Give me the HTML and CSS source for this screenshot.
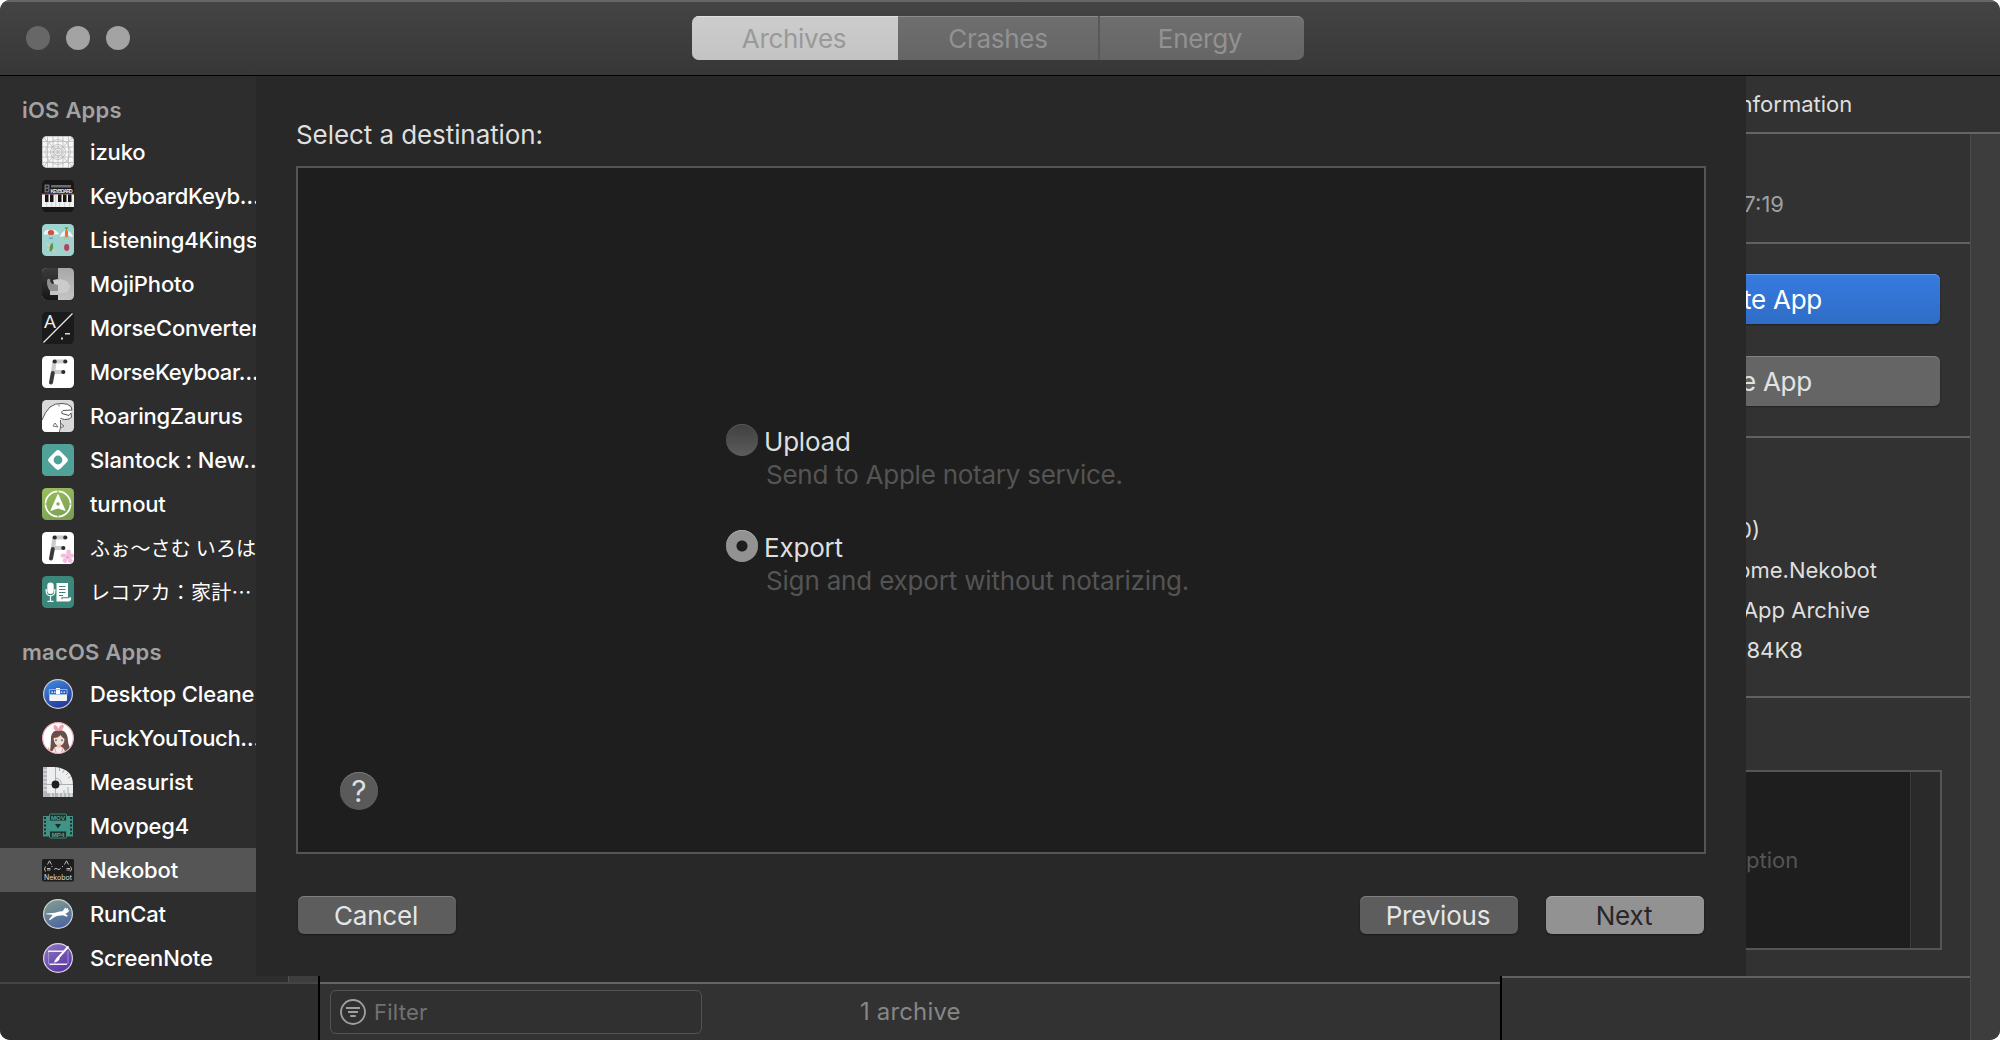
FILE: index.html
```html
<!DOCTYPE html>
<html lang="en">
<head>
<meta charset="utf-8">
<title>Archives</title>
<link rel="stylesheet" href="styles.css">
</head>
<body>
<div class="window">
  <header class="titlebar">
    <div class="lights"><span class="light light-dim"></span><span class="light"></span><span class="light"></span></div>
    <div class="segments">
      <span class="segment segment-on">Archives</span>
      <span class="segment segment-mid">Crashes</span>
      <span class="segment segment-last">Energy</span>
    </div>
  </header>

  <div class="columns">
    <nav class="sidebar">
      <div class="list">
        <h2 class="group">iOS Apps</h2>
        <div class="app">
          <svg class="icon icon-round" viewBox="0 0 32 32"><rect width="32" height="32" fill="#f6f6f6"/><g fill="none" stroke="#bababa" stroke-width=".8"><rect x=".5" y=".5" width="31" height="31" rx="4"/><path d="M0 5.500H32M0 11H32M0 16H32M0 21H32M0 26.500H32M5.500 0V32M11 0V32M16 0V32M21 0V32M26.500 0V32M0 0L32 32M32 0L0 32"/><circle cx="16" cy="16" r="12.500"/><circle cx="16" cy="16" r="7.500"/><circle cx="16" cy="16" r="4"/></g></svg>
          <span class="name">izuko</span></div>
        <div class="app">
          <svg class="icon" viewBox="0 0 32 32"><rect width="32" height="32" rx="4.500" fill="#171717"/><path d="M2.500 4.500h5v8h-5zM9 5h20v2.500H9z" fill="#6c6c6c"/><path d="M4 6h2v1.500H4zM4 9h2v2H4z" fill="#222"/><text x="8.500" y="12.600" class="t-key" textLength="22">KEYBOARD</text><rect y="13.500" width="32" height="1" fill="#d63a3a"/><rect y="14.500" width="32" height="12.500" fill="#f2f2f2"/><path d="M3 14.500h3.500v7.500H3zM8 14.500h3.500v7.500H8zM16 14.500h3.500v7.500H16zM21 14.500h3.500v7.500H21zM26 14.500h3.500v7.500H26z" fill="#151515"/><path d="M4.700 22v5M9.700 22v5M13.700 15v12M17.700 22v5M22.700 22v5M27.700 22v5" stroke="#bbb" stroke-width=".6"/></svg>
          <span class="name name-cut">KeyboardKeyb…</span></div>
        <div class="app">
          <svg class="icon" viewBox="0 0 32 32"><rect width="32" height="32" rx="4.500" fill="#9fd3cf"/><path d="M1.500 10Q3 5 8 6q6-1.500 9 4-4 1-6 0H7q-3 1-5.500 0z" fill="#f3f5f3"/><ellipse cx="9" cy="8.500" rx="3.200" ry="2.600" fill="#cc563c"/><path d="M7 14.200h4" stroke="#5274b5" stroke-width=".8"/><path d="M18 13q1-5 6-7 6 2 7 7-4 0-6-3-3 3-7 3z" fill="#f3f5f3"/><ellipse cx="24.500" cy="9.500" rx="1.600" ry="4" fill="#df7337"/><path d="M22.500 3.500h4l-2 2z" fill="#3f8b4a"/><path d="M23.500 13l-1 3M25.500 13l1 3" stroke="#e5a780" stroke-width="1"/><path d="M5 19.500l8 9M5 26l7-4" stroke="#ecc8a2" stroke-width="1.300"/><path d="M10.500 18.500q-5 5-2 9.500 4-3 2-9.500z" fill="#57954d"/><path d="M19.500 20l3 2M30 20l-3 2M21 27h7" stroke="#ecb794" stroke-width="1.500"/><ellipse cx="24.700" cy="23.500" rx="2.600" ry="3.400" fill="#a84766"/></svg>
          <span class="name">Listening4Kings</span></div>
        <div class="app">
          <svg class="icon" viewBox="0 0 32 32"><defs><linearGradient id="photo" x1="0" y1="0" x2="0" y2="1"><stop offset="0" stop-color="#3c3c3c"/><stop offset="1" stop-color="#171717"/></linearGradient><linearGradient id="pale" x1="0" y1="0" x2="0" y2="1"><stop offset="0" stop-color="#a8a8a8"/><stop offset="1" stop-color="#c4c4c4"/></linearGradient></defs><rect width="32" height="32" rx="4.500" fill="url(#pale)"/><path d="M4.500 0H16V32H4.500A4.500 4.500 0 0 1 0 27.500V4.500A4.500 4.500 0 0 1 4.500 0z" fill="url(#photo)"/><path d="M5 14q0-4 3-3 0 5 4 5l4-2v9q-3 3-7 1-4-4-4-10z" fill="#8f8f8f"/><path d="M16 12l3-1 2 1q5 0 7 6-1 6-5 7h-7z" fill="#cbcbcb"/><path d="M8 23h8v4H8z" fill="#c4c4c4"/><path d="M11 12l5-1v6l-4-1z" fill="#d0d0d0"/></svg>
          <span class="name">MojiPhoto</span></div>
        <div class="app">
          <svg class="icon" viewBox="0 0 32 32"><rect width="32" height="32" rx="4.500" fill="#1b1b1b"/><text x="1.800" y="16" class="t-morse">A</text><path d="M1.500 30.500L30.500 1.500" stroke="#e6e6e6" stroke-width="1.300"/><path d="M19 25.500h2v2h-2zM23 21h5v1.500h-5z" fill="#ddd"/></svg>
          <span class="name">MorseConverter</span></div>
        <div class="app">
          <svg class="icon" viewBox="0 0 32 32"><rect width="32" height="32" rx="4.500" fill="#fff"/><path d="M12.500 5.500H23M11.500 16H21M12.500 5.500L11 16" stroke="#ccc" stroke-width="4.200" stroke-linecap="round"/><path d="M10.800 17L9 26.500" stroke="#3a3a3a" stroke-width="4" stroke-linecap="round"/><g fill="#2c2c2c"><circle cx="12.700" cy="5.500" r="2.100"/><circle cx="23.300" cy="5.500" r="2.100"/><circle cx="21.300" cy="16" r="2.100"/></g></svg>
          <span class="name name-cut">MorseKeyboar…</span></div>
        <div class="app">
          <svg class="icon" viewBox="0 0 32 32"><rect width="32" height="32" rx="4.500" fill="#d9d9d9"/><path d="M0 20Q3 12 8 7q5-4 12-3.500 6 0 9 3l1 4-1 1.500.5 3-1 3-4 1q-3-.5-5 1 1 6-1 12H4.500Q0 32 0 27z" fill="#fff"/><path d="M0 20Q3 12 8 7q5-4 12-3.500 6 0 9 3l1 3.500-9 .5q-2 1-1 3l7 2 2-2.500.5 4-2 2-5 .500-4-1M17.500 32q2-6 1-12" fill="none" stroke="#555" stroke-width="1"/><path d="M17 4.500v2M11 26l2-3 3 4zM18.500 23l3.500 3-3 2" fill="none" stroke="#666" stroke-width=".9"/></svg>
          <span class="name">RoaringZaurus</span></div>
        <div class="app">
          <svg class="icon" viewBox="0 0 32 32"><rect width="32" height="32" rx="4.500" fill="#50a198"/><rect x="8.200" y="8.200" width="15.600" height="15.600" rx="3.200" transform="rotate(45 16 16)" fill="#fff"/><circle cx="16" cy="16" r="4.400" fill="#50a198"/></svg>
          <span class="name">Slantock : New…</span></div>
        <div class="app">
          <svg class="icon" viewBox="0 0 32 32"><defs><linearGradient id="leaf" x1=".3" y1="0" x2=".7" y2="1"><stop offset="0" stop-color="#98bd5a"/><stop offset="1" stop-color="#7a9e55"/></linearGradient></defs><rect width="32" height="32" rx="4.500" fill="url(#leaf)"/><circle cx="16" cy="16" r="12.600" fill="none" stroke="#fff" stroke-width="1.700"/><path d="M16 1.500v4M16 26.500v4M1.500 16h4M26.500 16h4" stroke="#8bb057" stroke-width="1"/><path fill-rule="evenodd" d="M16 5.500L23.800 23 16 20.500 8.200 23zM16 14.200a1.700 1.700 0 1 0 .01 0z" fill="#fff"/></svg>
          <span class="name">turnout</span></div>
        <div class="app">
          <svg class="icon" viewBox="0 0 32 32"><rect width="32" height="32" rx="4.500" fill="#fff"/><path d="M12.500 5.500H23M11.500 16H21M12.500 5.500L11 16" stroke="#ccc" stroke-width="4.200" stroke-linecap="round"/><path d="M10.800 17L9 26.500" stroke="#3a3a3a" stroke-width="4" stroke-linecap="round"/><g fill="#2c2c2c"><circle cx="12.700" cy="5.500" r="2.100"/><circle cx="23.300" cy="5.500" r="2.100"/><circle cx="21.300" cy="16" r="2.100"/></g><g fill="#f3bddf"><ellipse cx="26.500" cy="20.500" rx="2.300" ry="3"/><ellipse cx="21.600" cy="23.600" rx="3" ry="2.200"/><ellipse cx="23" cy="28.600" rx="2.300" ry="2.500"/><ellipse cx="28.200" cy="28.600" rx="2.300" ry="2.500"/><ellipse cx="29.600" cy="23.600" rx="2.400" ry="2.200"/><circle cx="25.700" cy="25.300" r="2.400"/></g><circle cx="25.700" cy="25.300" r=".9" fill="#e08cc0"/></svg>
          <span class="name name-ja" lang="ja">ふぉ〜さむ いろは</span></div>
        <div class="app">
          <svg class="icon" viewBox="0 0 32 32"><rect width="32" height="32" rx="4.500" fill="#3b877b"/><rect x="5.300" y="6.500" width="6.400" height="11.500" rx="3.200" fill="#fff"/><path d="M4.200 13v2.500a4.300 4.300 0 0 0 8.600 0V13M8.500 20v5M5.500 25.300h6" fill="none" stroke="#fff" stroke-width="1.200"/><path d="M14.500 7h11.500v14.500h3.200q0 4-2.700 4H14.500z" fill="#fff"/><path d="M17 10.500h6.500M17 13.500h6.500M17 16.500h6.500M17 19.500h4M20 23.300v-1.500h7" fill="none" stroke="#3b877b" stroke-width="1.100"/></svg>
          <span class="name name-ja" lang="ja">レコアカ：家計…</span></div>

        <h2 class="group group-mac">macOS Apps</h2>
        <div class="app">
          <svg class="icon" viewBox="0 0 32 32"><defs><linearGradient id="blue" x1="0" y1="0" x2=".5" y2="1"><stop offset="0" stop-color="#3f8fe6"/><stop offset="1" stop-color="#283c9c"/></linearGradient></defs><circle cx="16" cy="16" r="14.400" fill="url(#blue)" stroke="#cfcfd0" stroke-width="1.200"/><path d="M7.300 16.500h17.700v5.500q0 1-1 1H8.300q-1 0-1-1z" fill="#f4f4f4"/><path d="M14 10h4v6h-4z" fill="#fff"/><path d="M7.300 11.500h17.700v5H7.300z" fill="none" stroke="#9cc1ee" stroke-width=".9"/><path d="M9.500 13.500h1.500v1.500H9.500zM12 13.500h1.500v1.500H12zM18.700 13.500h1.500v1.500h-1.500zM21.500 13.500H23v1.500h-1.500z" fill="#d8e6fa"/></svg>
          <span class="name">Desktop Cleane</span></div>
        <div class="app">
          <svg class="icon" viewBox="0 0 32 32"><defs><clipPath id="face"><circle cx="16" cy="16" r="15"/></clipPath></defs><circle cx="16" cy="16" r="15.400" fill="#fff" stroke="#efa9b6" stroke-width="1.200"/><g clip-path="url(#face)"><path d="M8 29Q9 20 9 15q1-7 8-7t8.500 7q0 6 3 13l-4 2z" fill="#6b4f49"/><path d="M11.500 16q5 0 7-3 1 2 4 4 0 6-5.500 7-5-1-5.500-8z" fill="#f8dfd2"/><path d="M10 32q1-8 6.500-8t7.500 8z" fill="#f6eceb"/><path d="M15 22h3.500v4H15z" fill="#f3cdbd"/><path d="M12.500 26l2 6M21 26l-2 6" stroke="#e8a5ae" stroke-width="1.200"/><circle cx="14" cy="18.300" r="1" fill="#4d7fa3"/><circle cx="20" cy="18.300" r="1" fill="#4d7fa3"/><path d="M6 25l3 4-3 2z" fill="#d9b3a0"/></g><path d="M16.500 9Q12 9.500 11.500 5q0-2.500 2-2 2.500 1.500 3 4 .5-4 3.500-4.500 2.500 0 1.500 3-1.500 3.500-5 3.500z" fill="#ee9fb2"/></svg>
          <span class="name name-cut">FuckYouTouch…</span></div>
        <div class="app">
          <svg class="icon" viewBox="0 0 32 32"><path d="M1 1h12.500Q31 3 31 19v12H1z" fill="#eceeef"/><path d="M1 1h4v30H1zM1 27h30v4H1z" fill="#b4b7ba"/><path d="M1 4h4M1 8h4M1 12h4M1 16h4M1 20h4M1 24h4M9 27v4M13 27v4M17 27v4M21 27v4M25 27v4M29 27v4" stroke="#eceeef" stroke-width="1.200"/><path d="M13.500 1v30M5 18.500h26M19.500 18.500a6.500 6.500 0 0 0-6-6.500M17.500 2v3M22 4l-1.500 3M26 7l-2 2M28.500 10.500l-2.500 1.500M26 21v6M22 24v3" fill="none" stroke="#a5a8ab" stroke-width=".9"/><circle cx="13.500" cy="18.500" r="3.900" fill="#1f1f1f"/></svg>
          <span class="name">Measurist</span></div>
        <div class="app">
          <svg class="icon" viewBox="0 0 32 32"><rect x="1" y="6" width="30" height="20.500" fill="#3f9486"/><path d="M3 7v19M29 7v19" stroke="#252b2a" stroke-width="2" stroke-dasharray="2 1.800"/><rect x="7.500" y="4" width="17" height="7" rx="1" fill="#22302d" stroke="#3f9486" stroke-width=".9"/><rect x="7.500" y="21" width="17" height="7" rx="1" fill="#22302d" stroke="#3f9486" stroke-width=".9"/><path d="M13 14h6l-3 4.500z" fill="#1f2b28"/><text x="16" y="9.900" class="t-mov">MOV</text><text x="16" y="26.900" class="t-mov">MP4</text></svg>
          <span class="name">Movpeg4</span></div>
        <div class="app app-on">
          <svg class="icon" viewBox="0 0 32 32"><rect y="5" width="32" height="22.500" rx="1.800" fill="#1c1c1c"/><path d="M5.500 10.500L7.500 6.800 9.500 10.500M22.500 10.500L24.500 6.800 26.500 10.500M3.500 12.500q-2 2.500 0 5M28.500 12.500q2 2.500 0 5M5 14.500h3.500M5 16h3.500M24.500 14.500H28M24.500 16H28M9.500 12l1 1M12 15.500q2-2 3.500-.5t3-.5M20 12l1 1" fill="none" stroke="#ccc" stroke-width=".9"/><text x="16" y="25.500" class="t-neko">Nekobot</text></svg>
          <span class="name">Nekobot</span></div>
        <div class="app">
          <svg class="icon" viewBox="0 0 32 32"><defs><linearGradient id="run" x1=".3" y1="0" x2=".7" y2="1"><stop offset="0" stop-color="#7f9c8e"/><stop offset="1" stop-color="#4a64a4"/></linearGradient></defs><circle cx="16" cy="16" r="14.400" fill="url(#run)" stroke="#cfd2d3" stroke-width="1.200"/><path d="M4.500 15.500L13 14.800q4-1.800 7.500-1.500l1.500-2 1.500-1.800.8 1.200 1.800-.6-.2 1.500 1.400 1.200-2 2-2 1 2.500 2-1 1-4-1.500-6 .8-3 1.500-4 2.700-.8-1 3-3.200.3-1.300-6.300-.500z" fill="#fff"/></svg>
          <span class="name">RunCat</span></div>
        <div class="app">
          <svg class="icon" viewBox="0 0 32 32"><defs><linearGradient id="ink" x1="0" y1="0" x2=".6" y2="1"><stop offset="0" stop-color="#8f7ac4"/><stop offset="1" stop-color="#5c37a6"/></linearGradient></defs><circle cx="16" cy="16" r="14.400" fill="url(#ink)" stroke="#d8d2e4" stroke-width="1.200"/><path d="M6 9.300h17M7.500 22.300h17.500" stroke="#f1edf8" stroke-width="1.400"/><path d="M6.500 10v12M26 9v13" stroke="#a795d4" stroke-width=".9"/><path d="M26 5L16 16" stroke="#fff" stroke-width="1.900" stroke-linecap="round"/><path d="M15.800 14.800l2 2q-2 3.500-6 3.700 1.800-4 4-5.700z" fill="#fff"/></svg>
          <span class="name">ScreenNote</span></div>
      </div>
      <div class="list-scroller"></div>
      <div class="sidebar-foot"></div>
    </nav>

    <main class="archives">
      <div class="archives-foot">
        <div class="filter">
          <svg class="filter-icon" viewBox="0 0 26 26"><circle cx="13" cy="13" r="12" fill="none" stroke="#a0a0a0" stroke-width="1.800"/><path d="M6 9H20M8 13H18M10.300 17H15.700" stroke="#a0a0a0" stroke-width="1.900"/></svg>
          <span class="filter-hint">Filter</span>
        </div>
        <span class="count">1 archive</span>
      </div>
    </main>

    <aside class="inspector">
      <div class="inspector-head">Archive Information</div>
      <div class="inspector-row">
        <div class="inspector-main">
          <section class="stamp">7:19</section>
          <section class="actions">
            <div class="action action-blue">Distribute App</div>
            <div class="action">Validate App</div>
          </section>
          <section class="details">
            <span class="v-version">0)</span>
            <span class="v-id">ome.Nekobot</span>
            <span class="v-type">App Archive</span>
            <span class="v-team">84K8</span>
          </section>
          <section class="notes">
            <div class="note-box"><div class="note-text">No description</div><div class="note-scroller"></div></div>
          </section>
        </div>
        <div class="inspector-scroller"></div>
      </div>
    </aside>
  </div>

  <div class="sheet">
    <h1 class="prompt">Select a destination:</h1>
    <div class="panel">
      <div class="option">
        <span class="radio"></span>
        <span class="option-name">Upload</span>
        <span class="option-note note-upload">Send to Apple notary service.</span>
      </div>
      <div class="option">
        <span class="radio radio-on"></span>
        <span class="option-name">Export</span>
        <span class="option-note">Sign and export without notarizing.</span>
      </div>
      <span class="help">?</span>
    </div>
    <div class="buttons">
      <span class="button button-cancel">Cancel</span>
      <span class="button">Previous</span>
      <span class="button button-next">Next</span>
    </div>
  </div>
</div>
</body>
</html>
```
FILE: styles.css
```css
* { box-sizing: border-box; }

body {
  margin: 0;
  background: #fff;
  font-family: Inter, "Noto Sans CJK JP", sans-serif;
  font-size: 22px;
  color: #dfdfdf;
}

.window {
  position: relative;
  display: flex;
  flex-direction: column;
  width: 2000px;
  height: 1040px;
  border-radius: 10px;
  overflow: hidden;
  background: #323232;
}

/* Title bar */
.titlebar {
  display: grid;
  grid-template-columns: 692px auto 1fr;
  height: 76px;
  padding-top: 14px;
  background: linear-gradient(#444, #373737);
  border-top: 2px solid #666;
  border-bottom: 1px solid #000;
}
.lights { display: flex; gap: 16px; padding: 10px 0 0 26px; }
.light { width: 24px; height: 24px; border-radius: 50%; background: #a3a3a3; }
.light-dim { background: #676767; }
.segments {
  display: flex;
  height: 44px;
  border-radius: 7px;
  overflow: hidden;
  font-size: 26px;
  line-height: 45px;
  letter-spacing: -0.3px;
  text-align: center;
  color: #929292;
  background: linear-gradient(#6f6f6f, #656565);
  box-shadow: inset 0 1px #8a8a8a;
}
.segment-on {
  width: 206px;
  padding-right: 2px;
  background: linear-gradient(#cdcdcd, #c3c3c3);
  box-shadow: inset 0 1px #e0e0e0;
  color: #999;
}
.segment-mid { width: 202px; border-right: 2px solid #595959; }
.segment-last { width: 204px; padding-right: 4px; }

.columns {
  flex: 1;
  display: grid;
  grid-template-columns: 320px 1182px 1fr;
}

/* Sidebar */
.sidebar {
  display: flex;
  flex-direction: column;
  border-right: 2px solid #000;
  background: #2d2d2d;
  color: #fff;
  font-weight: 500;
}
.list { height: 900px; padding-top: 12px; overflow: hidden; }
.group {
  height: 42px;
  margin: 0;
  padding-left: 22px;
  font-size: 22px;
  font-weight: 600;
  line-height: 44px;
  letter-spacing: 0.22px;
  color: #a2a2a2;
}
.group-mac { height: 42px; margin-top: 16px; }
.app { display: flex; align-items: center; height: 44px; padding-left: 42px; white-space: nowrap; }
.app-on { background: #555; }
.icon { flex: none; width: 32px; height: 32px; }
.icon-round { border-radius: 5px; }
.name { margin-left: 16px; line-height: 44px; letter-spacing: -0.15px; }
.name-cut { letter-spacing: -0.34px; }
.name-ja {
  font-family: "Noto Sans CJK JP", sans-serif;
  font-size: 20px;
  font-weight: 400;
  letter-spacing: 0.2px;
}
.list-scroller {
  align-self: flex-end;
  width: 30px;
  height: 6px;
  background: #3d3d3d;
  border-left: 1px solid #505050;
}
.sidebar-foot { flex: 1; border-top: 2px solid #454545; }

.t-key, .t-mov { font-family: "Liberation Sans", sans-serif; font-weight: 700; letter-spacing: 0; }
.t-key { font-size: 5px; fill: #eee; }
.t-morse { font-size: 19px; font-family: Roboto, sans-serif; font-weight: 400; fill: #eee; }
.t-mov { font-size: 6.2px; fill: #4ba595; text-anchor: middle; }
.t-neko { font-size: 7px; font-weight: 400; fill: #ddd; text-anchor: middle; }

/* Archive list and its filter bar */
.archives {
  display: flex;
  flex-direction: column;
  justify-content: flex-end;
  background: #282828;
  border-right: 2px solid #000;
}
.archives-foot {
  display: flex;
  align-items: flex-start;
  height: 58px;
  padding: 6px 0 0 10px;
  border-top: 2px solid #656565;
  background: #323232;
}
.filter {
  display: flex;
  align-items: center;
  width: 372px;
  height: 44px;
  padding-left: 9px;
  border: 1px solid #525252;
  border-radius: 6px;
  background: #303030;
}
.filter-icon { width: 26px; height: 26px; }
.filter-hint { margin-left: 8px; letter-spacing: 0.25px; color: #727272; }
.count { margin-left: 158px; font-size: 24px; line-height: 43px; letter-spacing: 0.15px; color: #868686; }

/* Inspector */
.inspector { display: flex; flex-direction: column; }
.inspector-head { height: 56px; padding-right: 1px; line-height: 56px; text-align: center; }
.inspector-row { flex: 1; display: grid; grid-template-columns: 468px 30px; border-top: 2px solid #656565; }
.inspector-scroller { background: #3d3d3d; border-left: 1px solid #4b4b4b; }
.stamp {
  height: 110px;
  padding: 48px 186px 0 0;
  border-bottom: 2px solid #616161;
  line-height: 44px;
  text-align: right;
  color: #a0a0a0;
}
.actions {
  display: flex;
  flex-direction: column;
  gap: 32px;
  height: 194px;
  padding: 30px 30px 0;
  border-bottom: 2px solid #616161;
}
.action {
  height: 50px;
  border-radius: 6px;
  background: #656565;
  box-shadow: inset 0 1px #818181, 0 1px 2px #222;
  font-size: 26px;
  line-height: 51px;
  letter-spacing: -0.25px;
  text-align: center;
  color: #e3e3e3;
}
.action-blue {
  background: linear-gradient(#367be0, #2f6dc6);
  box-shadow: inset 0 1px #6198e7, 0 1px 2px #222;
  color: #fff;
}
.details {
  display: flex;
  flex-direction: column;
  height: 260px;
  padding-top: 72px;
  border-bottom: 2px solid #616161;
  line-height: 40px;
  text-align: right;
}
.v-version { padding-right: 210px; }
.v-id { padding-right: 93px; }
.v-type { padding-right: 100px; }
.v-team { padding-right: 167px; letter-spacing: 0.1px; }
.notes { height: 280px; padding: 72px 28px 0 30px; border-bottom: 2px solid #616161; }
.note-box { display: grid; grid-template-columns: 1fr 30px; height: 180px; border: 2px solid #555; }
.note-text { line-height: 176px; text-align: center; background: #1e1e1e; color: #555; }
.note-scroller { background: #2a2a2a; border-left: 1px solid #3c3c3c; }

/* Sheet that hangs from the title bar */
.sheet {
  position: absolute;
  left: 256px;
  top: 76px;
  width: 1490px;
  height: 900px;
  padding: 43px 40px 0;
  background: #282828;
}
.prompt { margin: 0 0 16px; font-size: 26px; font-weight: 400; line-height: 31px; letter-spacing: -0.08px; }
.panel {
  display: flex;
  flex-direction: column;
  height: 688px;
  padding: 256px 0 42px 428px;
  border: 2px solid #555;
  background: #1e1e1e;
}
.option {
  display: grid;
  grid-template-columns: 32px 1fr;
  grid-template-rows: 33px 33px;
  column-gap: 6px;
  height: 106px;
  padding-top: 1px;
  font-size: 26px;
  line-height: 33px;
}
.radio {
  width: 32px;
  height: 32px;
  margin-top: -1px;
  border-radius: 50%;
  background: linear-gradient(#404040, #5c5c5c);
  box-shadow: inset 0 1px #575757;
}
.radio-on {
  background: radial-gradient(circle, #1e1e1e 5px, #929292 6px);
  box-shadow: inset 0 1px #a8a8a8;
}
.option-name { letter-spacing: -0.2px; }
.option-note { grid-column: 2; padding-left: 2px; letter-spacing: -0.18px; color: #545454; }
.note-upload { letter-spacing: -0.25px; }
.help {
  width: 38px;
  height: 38px;
  margin: auto 0 0 -386px;
  border-radius: 50%;
  background: #5a5a5a;
  box-shadow: inset 0 1px #777;
  font-size: 30px;
  line-height: 39px;
  text-align: center;
}
.buttons { display: flex; gap: 28px; padding: 42px 2px 0; }
.button {
  width: 158px;
  height: 38px;
  padding-right: 2px;
  border-radius: 6px;
  background: #5d5d5d;
  box-shadow: inset 0 1px #7e7e7e, 0 1px 2px #1a1a1a;
  font-size: 26px;
  line-height: 39px;
  letter-spacing: -0.2px;
  text-align: center;
  color: #e6e6e6;
}
.button-cancel { margin-right: auto; }
.button-next { background: #929292; box-shadow: inset 0 1px #a9a9a9, 0 1px 2px #1a1a1a; color: #262626; }
```
